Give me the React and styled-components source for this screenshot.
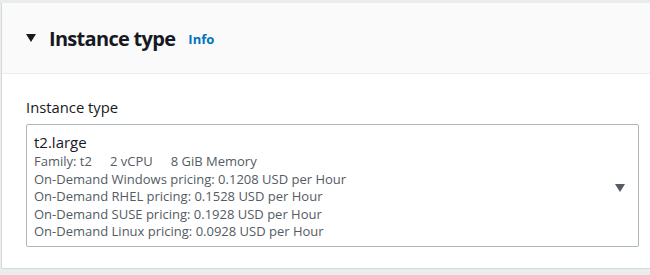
import React from 'react';
import styled, { createGlobalStyle } from 'styled-components';

const GlobalStyle = createGlobalStyle`
  html, body {
    margin: 0;
    padding: 0;
    background: #f2f3f3;
  }
  body {
    font-family: 'Open Sans', 'Noto Sans', sans-serif;
    color: #16191f;
  }
`;

const Panel = styled.section`
  width: 650px;
  height: 275px;
  box-sizing: border-box;
  padding-top: 3px;
  background: #eaeded;
`;

const Card = styled.div`
  background: #ffffff;
  border-left: 1px solid #d5dbdb;
  margin-left: 1px;
  height: 266px;
  box-sizing: border-box;
  border-bottom: 1px solid #d5dbdb;
`;

const Header = styled.header`
  display: flex;
  align-items: center;
  height: 71px;
  box-sizing: border-box;
  padding: 0 0 0 24px;
  background: #fafafa;
  border-bottom: 1px solid #eaeded;
`;

const Caret = styled.span`
  width: 0;
  height: 0;
  border-left: ${(p) => p.size}px solid transparent;
  border-right: ${(p) => p.size}px solid transparent;
  border-top: ${(p) => p.size * 1.6}px solid ${(p) => p.color};
  margin-top: ${(p) => p.lift || 0}px;
`;

const Title = styled.h2`
  margin: 0 0 0 13px;
  font-size: 20px;
  font-weight: 700;
  letter-spacing: -0.7px;
`;

const InfoLink = styled.a`
  margin-left: 13px;
  font-size: 13px;
  font-weight: 700;
  color: #0073bb;
  text-decoration: none;
  padding-top: 2px;
`;

const Body = styled.div`
  padding: 22px 12px 0 24px;
`;

const Label = styled.label`
  display: block;
  font-size: 14.8px;
  line-height: 22px;
  margin-bottom: 6px;
`;

const Select = styled.div`
  display: flex;
  align-items: center;
  width: 613px;
  height: 123px;
  box-sizing: border-box;
  border: 1px solid #aab7b8;
  border-radius: 2px;
  padding: 6px 13px 0 7px;
`;

const Option = styled.div`
  flex: 1;
  align-self: flex-start;
`;

const OptionName = styled.div`
  font-size: 15px;
  line-height: 22px;
`;

const Detail = styled.div`
  display: flex;
  gap: 18px;
  font-size: 13px;
  line-height: 17.5px;
  color: #545b64;
`;

const pricing = [
  'On-Demand Windows pricing: 0.1208 USD per Hour',
  'On-Demand RHEL pricing: 0.1528 USD per Hour',
  'On-Demand SUSE pricing: 0.1928 USD per Hour',
  'On-Demand Linux pricing: 0.0928 USD per Hour',
];

export default function App() {
  return (
    <>
      <GlobalStyle />
      <Panel>
        <Card>
          <Header>
            <Caret size={5} color="#16191f" />
            <Title>Instance type</Title>
            <InfoLink href="#">Info</InfoLink>
          </Header>
          <Body>
            <Label>Instance type</Label>
            <Select>
              <Option>
                <OptionName>t2.large</OptionName>
                <Detail>
                  <span>Family: t2</span>
                  <span>2 vCPU</span>
                  <span>8 GiB Memory</span>
                </Detail>
                {pricing.map((d) => (
                  <Detail key={d}>{d}</Detail>
                ))}
              </Option>
              <Caret size={5.5} color="#545b64" lift={-2} />
            </Select>
          </Body>
        </Card>
      </Panel>
    </>
  );
}
